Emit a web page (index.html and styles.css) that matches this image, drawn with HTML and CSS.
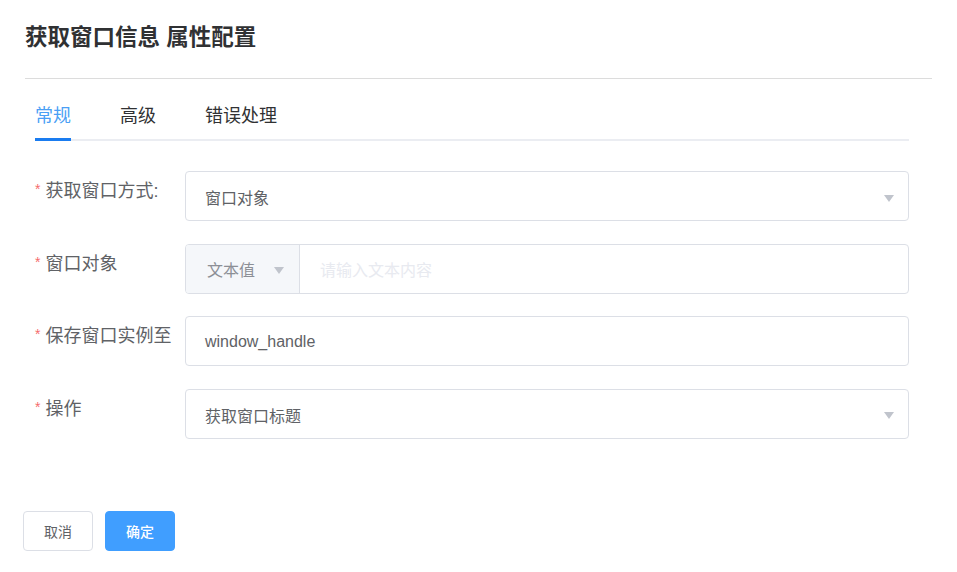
FILE: index.html
```html
<!DOCTYPE html>
<html lang="zh-CN">
<head>
  <meta charset="UTF-8" />
  <title>获取窗口信息 属性配置</title>
  <link rel="stylesheet" href="styles.css">
</head>
<body>
  <div class="dialog">
    <div class="dialog-header">
      <div class="dialog-title">获取窗口信息 属性配置</div>
    </div>

    <div class="content">
      <div class="tabs">
        <div class="tab active">常规</div>
        <div class="tab">高级</div>
        <div class="tab">错误处理</div>
      </div>

      <div class="form">
        <div class="form-row">
          <div class="form-label"><span class="req">*</span>获取窗口方式:</div>
          <div class="control select">
            <span class="value">窗口对象</span>
            <span class="caret"></span>
          </div>
        </div>
        <div class="form-row">
          <div class="form-label"><span class="req">*</span>窗口对象</div>
          <div class="control group">
            <div class="prepend">
              <span>文本值</span>
              <span class="caret"></span>
            </div>
            <div class="placeholder">请输入文本内容</div>
          </div>
        </div>
        <div class="form-row">
          <div class="form-label"><span class="req">*</span>保存窗口实例至</div>
          <div class="control">
            <span class="value">window_handle</span>
          </div>
        </div>
        <div class="form-row">
          <div class="form-label"><span class="req">*</span>操作</div>
          <div class="control select">
            <span class="value">获取窗口标题</span>
            <span class="caret"></span>
          </div>
        </div>
      </div>
    </div>

    <div class="footer">
      <button class="btn">取消</button>
      <button class="btn primary">确定</button>
    </div>
  </div>
</body>
</html>
```
FILE: styles.css
```css
html, body {
  margin: 0;
  padding: 0;
  background-color: #fff;
  font-family: 'Liberation Sans', 'Noto Sans CJK SC', sans-serif;
}
.dialog {
  width: 909px;
  padding: 0 25px 0 23px;
}
.dialog-header {
  margin-left: 2px;
  padding-top: 22px;
  height: 56px;
  border-bottom: 1px solid #dcdcdc;
}
.dialog-title {
  font-size: 22.5px;
  line-height: 32px;
  font-weight: bold;
  color: #303133;
}
.content {
  margin: 0 23px 0 12px;
}
.tabs {
  display: flex;
  gap: 49px;
  margin-top: 20px;
  border-bottom: 2px solid #ebedf2;
}
.tab {
  position: relative;
  font-size: 18px;
  line-height: 34px;
  padding-bottom: 6px;
  color: #303133;
}
.tab.active {
  color: #4a9ff5;
}
.tab.active::after {
  content: '';
  position: absolute;
  left: 0;
  right: 0;
  bottom: -2px;
  height: 3px;
  background-color: #1a7cf0;
}
.form {
  margin-top: 30px;
}
.form-row {
  display: flex;
  margin-bottom: 22.5px;
}
.form-label {
  width: 150px;
  flex-shrink: 0;
  font-size: 18px;
  line-height: 40px;
  color: #606266;
  white-space: nowrap;
}
.req {
  font-size: 14px;
  color: #f56c6c;
  margin-right: 5px;
  vertical-align: top;
  line-height: 36px;
}
.control {
  flex: 1;
  height: 48px;
  border: 1px solid #dcdfe6;
  border-radius: 4px;
  display: flex;
  align-items: center;
  padding: 0 14px 0 19px;
  font-size: 16px;
  color: #606266;
}
.control .value {
  flex: 1;
  padding-top: 2px;
}
.caret {
  width: 0;
  height: 0;
  border-left: 5.5px solid transparent;
  border-right: 5.5px solid transparent;
  border-top: 7px solid #c0c4cc;
  margin-top: 4px;
}
.control.group {
  padding: 0;
  overflow: hidden;
}
.prepend {
  box-sizing: border-box;
  width: 114px;
  height: 100%;
  padding: 0 15px 0 21px;
  background-color: #f5f7fa;
  border-right: 1px solid #dcdfe6;
  display: flex;
  align-items: center;
  justify-content: space-between;
  color: #8c8f96;
}
.placeholder {
  padding-left: 20px;
  color: #e8eaf0;
}
.footer {
  display: flex;
  gap: 12px;
  margin-top: 72px;
}
.btn {
  width: 70px;
  height: 40px;
  border-radius: 4px;
  border: 1px solid #dcdfe6;
  background-color: #fff;
  color: #606266;
  font-family: inherit;
  font-size: 14px;
  padding: 0;
}
.btn.primary {
  background-color: #409eff;
  border-color: #409eff;
  color: #fff;
  font-weight: 500;
}
```
